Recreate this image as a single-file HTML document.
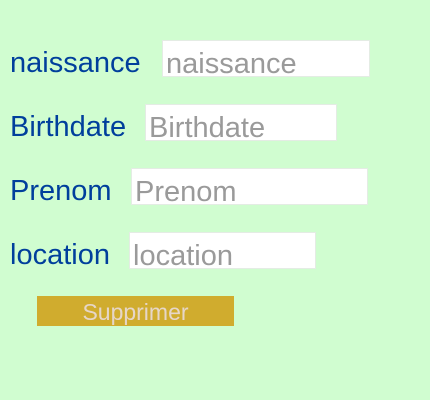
<!DOCTYPE html>
<html><head><style>
body{margin:0;width:430px;height:400px;background:#d0fdd0;font-family:"Liberation Sans",sans-serif;position:relative;overflow:hidden}
.l{position:absolute;left:10px;color:#003f9c;font-size:29px;line-height:37px}
.i{position:absolute;background:#fff;border:1px solid #e4ece4;box-sizing:border-box;height:37px;color:#9a9a9a;font-size:29px;line-height:30px;padding-left:3px;padding-top:8px;overflow:hidden}
.b{position:absolute;left:37px;top:296px;width:197px;height:30px;background:#d0ac2e;color:#e6d6c8;font-size:23px;line-height:33px;text-align:center}
</style></head><body>
<div class="l" style="top:45px">naissance</div><div class="i" style="left:162px;top:40px;width:208px">naissance</div>
<div class="l" style="top:109px">Birthdate</div><div class="i" style="left:145px;top:104px;width:192px">Birthdate</div>
<div class="l" style="top:173px">Prenom</div><div class="i" style="left:131px;top:168px;width:237px">Prenom</div>
<div class="l" style="top:237px">location</div><div class="i" style="left:129px;top:232px;width:187px">location</div>
<div class="b">Supprimer</div>
</body></html>
